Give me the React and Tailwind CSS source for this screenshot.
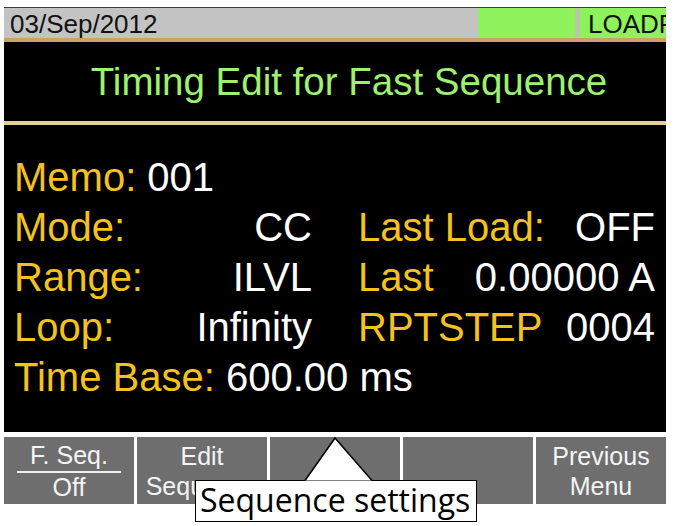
export default function App() {
  const font = { fontFamily: '"Liberation Sans", Arial, sans-serif' };

  const rows = [
    { label: "Mode:", value: "CC", label2: "Last Load:", value2: "OFF" },
    { label: "Range:", value: "ILVL", label2: "Last", value2: "0.00000 A" },
    { label: "Loop:", value: "Infinity", label2: "RPTSTEP", value2: "0004" },
  ];

  return (
    <div className="relative h-[526px] w-[676px] bg-white" style={font}>
      <div className="ml-[4px] w-[662px] pt-[7px]">
        {/* Status bar */}
        <div className="h-[1px] bg-[#3a3a3a]" />
        <div className="flex h-[30px] bg-[#c3c3c3]">
          <div className="flex w-[474px] items-center pl-[6px] pt-[2px] text-[26px] leading-none text-[#111]">
            03/Sep/2012
          </div>
          <div className="w-[97px] bg-[#8ef25c]" />
          <div className="w-[5px] bg-[#b9c9a8]" />
          <div className="flex flex-1 items-center overflow-hidden whitespace-nowrap bg-[#8ef25c] pl-[8px] pt-[2px] text-[26px] leading-none text-[#111]">
            LOADR
          </div>
        </div>
        <div className="h-[4px] bg-[#c7a465]" />

        {/* Screen */}
        <div className="bg-black">
          <div className="flex h-[79px] items-center justify-center pl-[28px] text-[38.5px] text-[#9ef06e]">
            Timing Edit for Fast Sequence
          </div>
          <div className="h-[4px] bg-[#e2cf92]" />
          <div className="h-[307px] pl-[10px] pr-[11px] pt-[27px] text-[40px] leading-[50px]">
            <div className="h-[50px] whitespace-nowrap">
              <span className="text-[#f4c21c]">Memo: </span>
              <span className="text-white">001</span>
            </div>
            {rows.map((r) => (
              <div key={r.label} className="flex h-[50px] whitespace-nowrap">
                <div className="flex w-[298px] justify-between">
                  <span className="text-[#f4c21c]">{r.label}</span>
                  <span className="text-white">{r.value}</span>
                </div>
                <div className="ml-[46px] flex flex-1 justify-between">
                  <span className="text-[#f4c21c]">{r.label2}</span>
                  <span className="text-white">{r.value2}</span>
                </div>
              </div>
            ))}
            <div className="h-[50px] whitespace-nowrap">
              <span className="text-[#f4c21c]">Time Base: </span>
              <span className="text-white">600.00 ms</span>
            </div>
          </div>
        </div>

        {/* Soft keys */}
        <div className="mt-[5px] flex h-[67px] gap-[3px] text-[25px] leading-[30px] text-[#f4f4f4]">
          <div className="flex flex-1 flex-col items-center justify-center bg-[#6e6e6e]">
            <span>F. Seq.</span>
            <span className="my-[1px] h-[2px] w-[104px] bg-[#f0f0f0]" />
            <span className="-mt-[2px]">Off</span>
          </div>
          <div className="flex flex-1 flex-col items-center justify-center overflow-hidden whitespace-nowrap bg-[#6e6e6e]">
            <span>Edit</span>
            <span>Sequence</span>
          </div>
          <div className="flex-1 bg-[#6e6e6e]" />
          <div className="flex-1 bg-[#6e6e6e]" />
          <div className="flex flex-1 flex-col items-center justify-center bg-[#6e6e6e]">
            <span>Previous</span>
            <span>Menu</span>
          </div>
        </div>
      </div>

      {/* Tooltip */}
      <div
        className="absolute left-[195px] top-[480px] h-[42px] w-[282px] border-[1.5px] border-black bg-white pl-[4px] text-[32px] leading-[38px] text-black"
        style={{ fontFamily: '"Open Sans", "Noto Sans", sans-serif' }}
      >
        Sequence settings
      </div>
      <svg
        className="absolute left-[300px] top-[436px]"
        width="78"
        height="47"
        viewBox="0 0 78 47"
      >
        <polygon points="5,44.5 35,2 72,44.5" fill="white" />
        <polyline
          points="5,44.5 35,2 72,44.5"
          fill="none"
          stroke="black"
          strokeWidth="1.6"
        />
      </svg>
    </div>
  );
}
